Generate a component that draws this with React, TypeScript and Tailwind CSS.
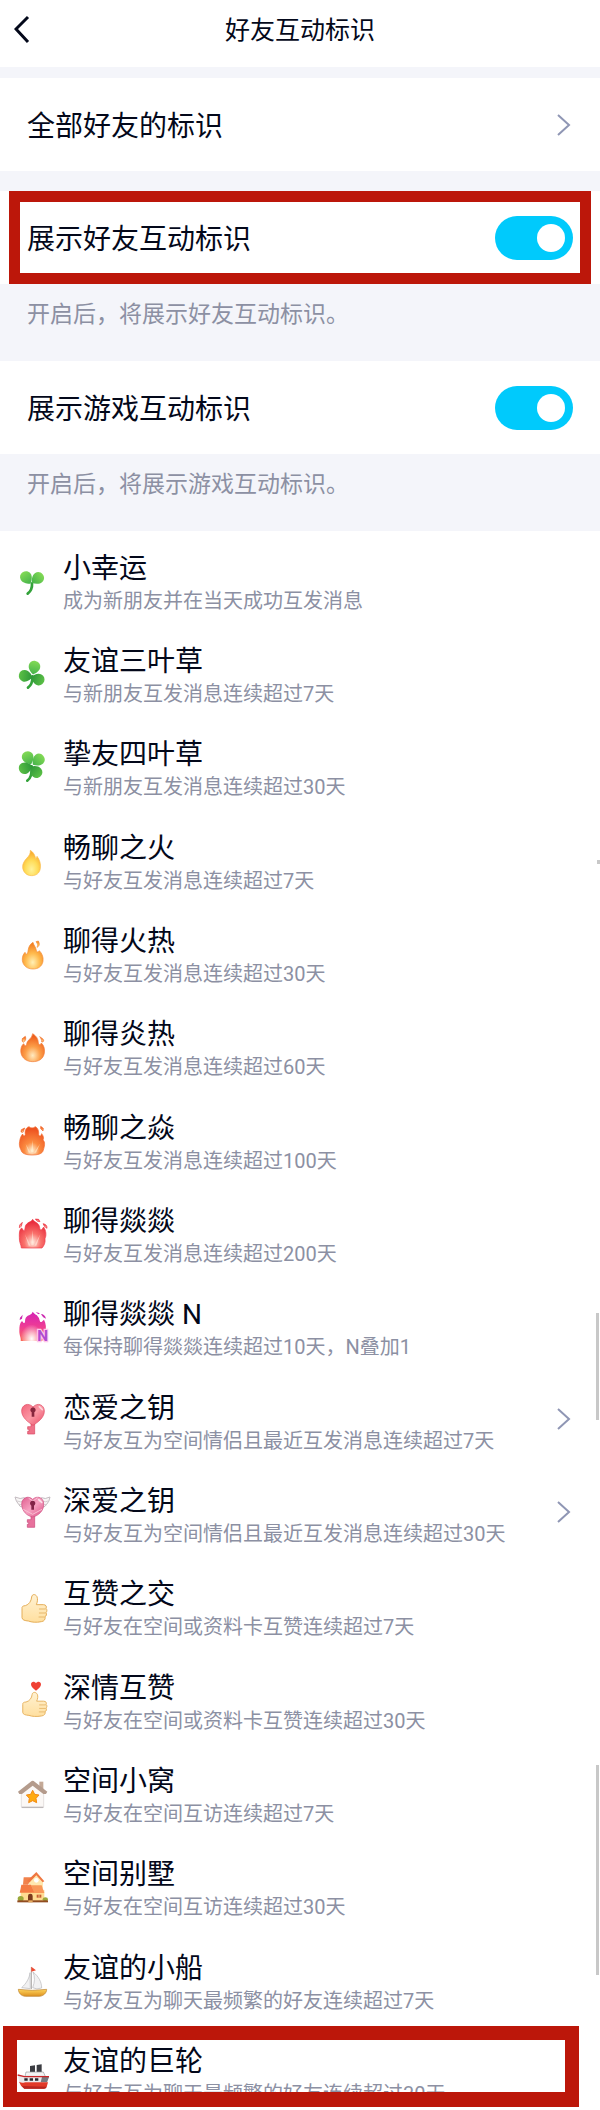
import React, { useState } from 'react';

type BadgeItem = {
	title: string;
	detail: string;
	icon: React.ReactNode;
	link?: boolean;
};

const Clover: React.FC<{ leaves: number[][]; stem: string }> = ({
	leaves,
	stem,
}) => (
	<>
		<path d={stem} fill="none" stroke="#33a23a" strokeWidth="8" strokeLinecap="round" />
		{leaves.map(([x, y, angle, tone]) => (
			<g key={`${x}-${y}`} transform={`translate(${x} ${y}) rotate(${angle}) scale(1.15)`}>
				<path
					d="M0 19C-8 14-16 6-15-4C-14-12-8-17 0-17C8-17 14-12 15-4C16 6 8 14 0 19Z"
					fill={tone ? 'url(#leafDark)' : 'url(#leafLight)'}
				/>
			</g>
		))}
	</>
);

const Thumb: React.FC = () => (
	<>
		<path
			d="M24 62C23 56 27 53 34 53C45 50 52 39 53 27C54 18 64 17 69 26C72 34 70 43 67 50H88C96 50 99 56 96 61C100 65 99 71 96 74C99 79 97 84 93 86C95 93 91 100 82 101C67 104 53 103 43 99C32 98 25 96 24 89Z"
			fill="url(#skin)"
			stroke="#e5ae58"
			strokeWidth="3"
		/>
		<path d="M76 63H94M76 75H94M75 87H91" stroke="#e7b86c" strokeWidth="3" strokeLinecap="round" />
	</>
);

// shared gradients, referenced by every badge icon
const IconDefs: React.FC = () => (
	<svg className="absolute size-0" aria-hidden="true">
		<defs>
			<linearGradient id="leafLight" x1="0" y1="0" x2="0" y2="1">
				<stop offset="0" stopColor="#83da55" />
				<stop offset="1" stopColor="#45b34b" />
			</linearGradient>
			<linearGradient id="leafDark" x1="0" y1="0" x2="0" y2="1">
				<stop offset="0" stopColor="#5cc046" />
				<stop offset="1" stopColor="#2c9638" />
			</linearGradient>
			<radialGradient id="fireYellow" cx=".5" cy=".75" r=".7">
				<stop offset="0" stopColor="#fff29a" />
				<stop offset=".5" stopColor="#ffdc58" />
				<stop offset="1" stopColor="#f9a72c" />
			</radialGradient>
			<radialGradient id="fireAmber" cx=".5" cy=".75" r=".75">
				<stop offset="0" stopColor="#fff0b5" />
				<stop offset=".45" stopColor="#ffbb4e" />
				<stop offset="1" stopColor="#f0751c" />
			</radialGradient>
			<radialGradient id="fireOrange" cx=".5" cy=".78" r=".7">
				<stop offset="0" stopColor="#ffeac0" />
				<stop offset=".45" stopColor="#fc9f49" />
				<stop offset="1" stopColor="#ee5c1b" />
			</radialGradient>
			<radialGradient id="fireDeep" cx=".5" cy=".85" r=".75">
				<stop offset="0" stopColor="#fff0d5" />
				<stop offset=".4" stopColor="#fb8b40" />
				<stop offset="1" stopColor="#ee5421" />
			</radialGradient>
			<radialGradient id="fireRed" cx=".5" cy=".8" r=".7">
				<stop offset="0" stopColor="#ffeade" />
				<stop offset=".45" stopColor="#f9716b" />
				<stop offset="1" stopColor="#e92d3d" />
			</radialGradient>
			<linearGradient id="fireEdge" x1="0" y1="0" x2="0" y2="1">
				<stop offset="0" stopColor="#d421b5" />
				<stop offset=".5" stopColor="#ee3c95" />
				<stop offset="1" stopColor="#fb6a5a" />
			</linearGradient>
			<radialGradient id="fireGlow" cx=".5" cy=".75" r=".5">
				<stop offset="0" stopColor="#ffffff" />
				<stop offset="1" stopColor="#ffffff" stopOpacity="0" />
			</radialGradient>
			<linearGradient id="heartRed" x1="0" y1="0" x2="1" y2="1">
				<stop offset="0" stopColor="#f2637a" />
				<stop offset=".5" stopColor="#fb98a5" />
				<stop offset="1" stopColor="#e84a64" />
			</linearGradient>
			<linearGradient id="heartPink" x1="0" y1="0" x2="1" y2="1">
				<stop offset="0" stopColor="#e05f90" />
				<stop offset=".5" stopColor="#f7a2c2" />
				<stop offset="1" stopColor="#d94c82" />
			</linearGradient>
			<linearGradient id="skin" x1="0" y1="0" x2="0" y2="1">
				<stop offset="0" stopColor="#fff2d3" />
				<stop offset="1" stopColor="#ffdf9f" />
			</linearGradient>
			<linearGradient id="hullYellow" x1="0" y1="0" x2="0" y2="1">
				<stop offset="0" stopColor="#ffd45c" />
				<stop offset="1" stopColor="#dc901f" />
			</linearGradient>
		</defs>
	</svg>
);

const badges: BadgeItem[] = [
	{
		title: '小幸运',
		detail: '成为新朋友并在当天成功互发消息',
		icon: (
			<Clover
				leaves={[[37, 47, -35, 0], [71, 49, 50, 0]]}
				stem="M54 64C55 77 50 88 41 95"
			/>
		),
	},
	{
		title: '友谊三叶草',
		detail: '与新朋友互发消息连续超过7天',
		icon: (
			<Clover
				leaves={[[61, 37, 10, 0], [34, 63, -80, 1], [72, 73, 110, 1]]}
				stem="M55 64C56 80 50 92 42 98"
			/>
		),
	},
	{
		title: '挚友四叶草',
		detail: '与新朋友互发消息连续超过30天',
		icon: (
			<Clover
				leaves={[[42, 29, -25, 0], [73, 36, 48, 0], [34, 60, -110, 1], [66, 71, 135, 1]]}
				stem="M53 55C54 75 51 91 40 98"
			/>
		),
	},
	{
		title: '畅聊之火',
		detail: '与好友互发消息连续超过7天',
		icon: (
			<path
				d="M49 25C59 31 63 40 65 50C67 49 69 46 69 43C77 53 81 66 79 79C77 94 66 101 53 101C38 101 28 91 26 77C25 65 31 57 38 49C45 42 50 35 49 25Z"
				fill="url(#fireYellow)"
				stroke="#fbbd4a"
				strokeWidth="2"
			/>
		),
	},
	{
		title: '聊得火热',
		detail: '与好友互发消息连续超过30天',
		icon: (
			<g fill="url(#fireAmber)" stroke="#f58e35" strokeWidth="2">
				<path d="M57 22C60 33 65 35 67 46C68 52 72 52 76 47C84 55 89 66 87 79C84 95 72 102 57 102C39 102 27 92 25 76C24 65 28 58 33 52C35 56 36 59 39 57C45 52 38 34 57 22Z" />
				<path d="M66 20L73 18C78 27 76 34 69 37C72 31 71 25 66 20Z" />
			</g>
		),
	},
	{
		title: '聊得炎热',
		detail: '与好友互发消息连续超过60天',
		icon: (
			<g fill="url(#fireOrange)" stroke="#f27a35" strokeWidth="2">
				<path d="M56 17C66 23 73 32 73 45C75 52 79 51 82 45C90 52 93 64 91 75C88 94 73 101 56 101C38 101 24 91 21 75C19 64 22 52 29 47C33 55 37 55 38 48C39 35 54 33 56 17Z" />
				<path d="M26 31L34 25C37 32 35 39 28 43C23 41 24 35 26 31Z" />
				<path d="M77 26L86 32C92 38 88 43 83 42C83 36 81 30 77 26Z" />
			</g>
		),
	},
	{
		title: '畅聊之焱',
		detail: '与好友互发消息连续超过100天',
		icon: (
			<>
				<g fill="url(#fireDeep)" stroke="#f2692c" strokeWidth="2">
					<path d="M45 14C51 19 57 19 64 14C72 18 75 27 74 38C77 44 80 43 83 35C89 43 90 49 87 54C95 60 91 75 88 84C86 96 71 99 54 99C37 99 23 95 21 84C16 75 15 66 17 58C18 49 21 42 26 36C29 44 32 43 34 37C32 27 35 17 45 14Z" />
					<path d="M22 23L32 18L27 31L21 30Z" />
					<path d="M80 13L88 19L87 27L80 20Z" />
				</g>
				<path d="M55 54L58 90L52 90ZM35 65L50 92H44ZM78 65L60 92H66Z" fill="#fff0cf" fillOpacity=".6" />
			</>
		),
	},
	{
		title: '聊得燚燚',
		detail: '与好友互发消息连续超过200天',
		icon: (
			<>
				<g fill="url(#fireRed)" stroke="#ee3b48" strokeWidth="2">
					<path d="M56 13C60 21 67 21 72 27C78 33 76 39 79 45C84 45 86 40 89 36C96 47 98 60 93 71C95 83 90 92 84 99H22C22 90 15 82 16 67C16 55 15 45 23 39C28 42 25 47 31 47C35 41 31 34 38 27C44 20 53 21 56 13Z" />
					<path d="M17 30L25 22L22 34L16 38Z" />
					<path d="M64 12L74 13L78 20L70 19Z" />
					<path d="M87 26Q100 28 99 40L92 35Z" />
				</g>
				<path d="M56 45L59 91H52ZM33 58L50 92H44ZM79 58L61 92H67Z" fill="#ffe9dc" fillOpacity=".6" />
			</>
		),
	},
	{
		title: '聊得燚燚 N',
		detail: '每保持聊得燚燚连续超过10天，N叠加1',
		icon: (
			<>
				<path
					d="M56 11C61 19 68 19 72 26C77 31 76 37 79 42C84 43 86 38 90 35C96 47 98 60 93 71C95 83 90 94 84 99H20C22 90 15 82 16 67C16 55 17 45 24 39C28 42 27 47 32 44C35 38 31 33 38 26C44 20 53 21 56 11Z"
					fill="url(#fireEdge)"
				/>
				<path d="M18 29L26 20L24 32L17 36ZM65 12L78 16L73 19ZM81 18Q92 18 96 32Q87 30 81 18Z" fill="#cb2bb0" />
				<ellipse cx="53" cy="71" rx="34" ry="43" fill="url(#fireGlow)" />
				<text x="70" y="99" fill="#b04bd0" stroke="#ffc7ea" strokeWidth="7" paintOrder="stroke" className="font-[Roboto,sans-serif] text-[46px] font-bold">
					N
				</text>
			</>
		),
	},
	{
		title: '恋爱之钥',
		detail: '与好友互为空间情侣且最近互发消息连续超过7天',
		link: true,
		icon: (
			<>
				<path d="M51 60V74H41V82H45V88H41V96H62V60Z" fill="#ef7188" stroke="#d94760" strokeWidth="2" />
				<path d="M57 70C40 59 24 46 23 28C22 8 44 0 57 15C70 0 91 8 91 27C91 47 73 60 57 70Z" fill="url(#heartRed)" stroke="#e04761" strokeWidth="2" />
				<path d="M49 24A8 8 0 1 1 61 31V44H53V31A8 8 0 0 1 49 24Z" fill="#86263d" />
				<path d="M76 14L85 23" stroke="#fff" strokeWidth="5" strokeLinecap="round" opacity=".6" />
			</>
		),
	},
	{
		title: '深爱之钥',
		detail: '与好友互为空间情侣且最近互发消息连续超过30天',
		link: true,
		icon: (
			<>
				<path d="M3 6Q20 14 31 8V38Q14 35 14 28Q6 20 3 6ZM108 6Q93 14 82 8V38Q96 35 98 28Q106 20 108 6Z" fill="#f8f6f6" stroke="#c3bbc0" strokeWidth="3" />
				<path d="M9 18Q21 23 28 18M15 28Q22 30 28 28M102 18Q94 23 85 18M97 28Q91 30 85 28" fill="none" stroke="#c3bbc0" strokeWidth="2" />
				<path d="M51 60V74H40V82H44V88H40V97H62V60Z" fill="#e7719c" stroke="#c94377" strokeWidth="2" />
				<path d="M56 66C39 63 24 49 23 28C23 8 43 0 56 13C70 0 90 8 89 28C89 48 74 62 56 66Z" fill="url(#heartPink)" stroke="#cf4b7e" strokeWidth="2" />
				<path d="M28 43L56 58L84 43M44 10L57 18L71 8" fill="none" stroke="#f9bfd3" strokeWidth="3" />
				<path d="M48 25A8 8 0 1 1 60 32V44H52V32A8 8 0 0 1 48 25Z" fill="#822448" />
				<path d="M74 14L83 22" stroke="#fff" strokeWidth="5" strokeLinecap="round" opacity=".7" />
			</>
		),
	},
	{
		title: '互赞之交',
		detail: '与好友在空间或资料卡互赞连续超过7天',
		icon: <Thumb />,
	},
	{
		title: '深情互赞',
		detail: '与好友在空间或资料卡互赞连续超过30天',
		icon: (
			<>
				<g transform="translate(3 14) scale(.97 .87)">
					<Thumb />
				</g>
				<path d="M66 26C57 20 51 14 51 7C51-2 62-3 66 4C70-3 81-2 81 7C81 14 75 20 66 26Z" fill="#ef4134" />
			</>
		),
	},
	{
		title: '空间小窝',
		detail: '与好友在空间互访连续超过7天',
		icon: (
			<>
				<path d="M76 20H88V42H76Z" fill="#c4a997" />
				<path d="M22 48L55 22L89 48V94Q89 98 85 98H26Q22 98 22 94Z" fill="#fbf8f6" stroke="#d9d3d1" strokeWidth="2" />
				<path d="M23 97H88" stroke="#bdb8b9" strokeWidth="4" />
				<path d="M12 50L53 18Q56 16 59 18L100 50L96 57H88L56 32L24 57H16Z" fill="#b49b8c" />
				<path d="M56 46L62 58L75 60L66 70L68 83L56 77L44 83L46 70L37 60L50 58Z" fill="#ffab12" stroke="#f38b16" strokeWidth="3" strokeLinejoin="round" />
			</>
		),
	},
	{
		title: '空间别墅',
		detail: '与好友在空间互访连续超过30天',
		icon: (
			<>
				<path d="M20 66H91V101H20Z" fill="#ffdc91" />
				<path d="M45 38L68 17L87 40V61H45Z" fill="#ffe7af" />
				<path d="M29 28H55L42 50H27Z" fill="#f1824c" />
				<path d="M67 12L91 40L86 43L67 22L47 43L39 39Z" fill="#ef7741" />
				<circle cx="67" cy="37" r="7" fill="#fff" />
				<path d="M22 50H51L63 74H17Q20 63 22 50Z" fill="#f47b43" />
				<path d="M51 52H83L91 75H61Z" fill="#f99859" />
				<path d="M42 100V84A7 7 0 0 1 56 84V100Z" fill="#7c3b1e" />
				<path d="M68 80H82V89H68Z" fill="#c65d31" />
				<path d="M75 80V89" stroke="#ffe6a8" strokeWidth="2" />
				<ellipse cx="20" cy="92" rx="9" ry="8" fill="#9aa83a" />
				<ellipse cx="94" cy="94" rx="8" ry="6" fill="#9aa83a" />
				<path d="M10 97H102V103H10Z" fill="#914c20" />
				<path d="M43 97H56V103H43Z" fill="#e8ad60" />
			</>
		),
	},
	{
		title: '友谊的小船',
		detail: '与好友互为聊天最频繁的好友连续超过7天',
		icon: (
			<>
				<path d="M52 15V81" stroke="#aaa6a4" strokeWidth="3" />
				<path d="M52 14L66 25L52 29Z" fill="#ef4a31" />
				<path d="M48 32C46 50 36 65 23 77L49 80Z" fill="#f1f1f2" stroke="#b7b7ba" strokeWidth="2" />
				<path d="M57 30C73 42 83 60 83 78Q68 84 56 77Q66 51 57 30Z" fill="#f1f1f2" stroke="#b7b7ba" strokeWidth="2" />
				<path d="M13 82Q55 88 98 82C98 94 87 102 77 103H34C22 102 14 94 13 82Z" fill="url(#hullYellow)" stroke="#b9812e" strokeWidth="2" />
			</>
		),
	},
	{
		title: '友谊的巨轮',
		detail: '与好友互为聊天最频繁的好友连续超过30天',
		icon: (
			<>
				<path d="M48 33L63 31V52H48ZM68 30L83 28V52H68Z" fill="#3b3d42" />
				<path d="M36 51H88L94 64H33Z" fill="#f4f4f4" stroke="#999b9f" strokeWidth="2" />
				<path d="M11 62L31 66H105L99 82H17Z" fill="#e9e9eb" />
				<path d="M84 66H105L99 82H80Z" fill="#77797f" />
				<path d="M11 60L31 65H105" fill="none" stroke="#c9282b" strokeWidth="4" />
				<path d="M31 70H41V77H31ZM47 70H57V77H47ZM63 70H73V77H63Z" fill="#26282d" />
				<path d="M15 80Q25 85 34 82H102L98 96Q96 101 90 101H31Q19 93 15 80Z" fill="#e23a28" />
				<path d="M24 93Q27 98 31 101H90Q96 101 98 95Z" fill="#b7261f" />
			</>
		),
	},
];

const Chevron: React.FC = () => (
	<svg viewBox="0 0 14 22" className="h-[22px] w-[14px] shrink-0" fill="none" stroke="#8f96b4" strokeWidth="2" aria-hidden="true">
		<path d="M1 1L12 11L1 21" />
	</svg>
);

const SwitchRow: React.FC<{ label: string; hint: string; marked?: boolean }> = ({
	label,
	hint,
	marked,
}) => {
	const [on, setOn] = useState(true);

	return (
		<section>
			<label className="relative flex h-[93px] cursor-pointer items-center justify-between bg-white px-[27px]">
				<span className="pt-1 text-[28px] leading-10">{label}</span>
				<input
					type="checkbox"
					role="switch"
					checked={on}
					onChange={() => setOn(!on)}
					className="flex h-11 w-[78px] appearance-none items-center rounded-full bg-[#c9cdd8] px-2 before:size-7 before:rounded-full before:bg-white before:content-[''] checked:justify-end checked:bg-[#00cafc]"
				/>
				{marked && (
					<span className="pointer-events-none absolute inset-x-[9px] inset-y-0 border-[11px] border-[#bc170a]" />
				)}
			</label>
			<p className="h-[77px] px-[27px] pt-[14px] text-[23px] leading-[34px] text-[#8c90a3]">
				{hint}
			</p>
		</section>
	);
};

const BadgeRow: React.FC<{ badge: BadgeItem }> = ({ badge }) => {
	const content = (
		<>
			<svg viewBox="0 0 108 120" className="mt-[30px] h-10 w-9 shrink-0 overflow-visible" aria-hidden="true">
				{badge.icon}
			</svg>
			<div className="min-w-0 flex-1 pt-[17px]">
				<h2 className="text-[28px] leading-10">{badge.title}</h2>
				<p className="text-xl leading-6 whitespace-nowrap text-[#8c90a3]">
					{badge.detail}
				</p>
			</div>
			{badge.link && (
				<div className="pt-9">
					<Chevron />
				</div>
			)}
		</>
	);

	return (
		<li className="h-[93px] nth-[3n]:h-[94px]">
			{badge.link ? (
				<a href="#detail" className="flex gap-[13px] pr-[29px] pl-[14px]">
					{content}
				</a>
			) : (
				<div className="flex gap-[13px] pr-[29px] pl-[14px]">{content}</div>
			)}
		</li>
	);
};

const App: React.FC = () => {
	const regular = badges.slice(0, -1);
	const last = badges[badges.length - 1];

	return (
		<div className="relative bg-[#f4f5fa] font-[Roboto,'Noto_Sans_CJK_SC',sans-serif] text-[#03081a]">
			<IconDefs />

			<header className="relative flex h-[67px] items-center justify-center bg-white pb-[6px]">
				<button type="button" aria-label="返回" className="absolute top-[13px] left-[14px]">
					<svg viewBox="0 0 16 32" className="h-8 w-4" fill="none" stroke="#03081a" strokeWidth="3" aria-hidden="true">
						<path d="M14 4L2 16L14 29" />
					</svg>
				</button>
				<h1 className="text-[25px] leading-9">好友互动标识</h1>
			</header>

			<a href="#all" className="mt-[11px] mb-5 flex h-[93px] items-center justify-between bg-white pr-[29px] pl-[27px]">
				<span className="pt-1 text-[28px] leading-10">全部好友的标识</span>
				<Chevron />
			</a>

			<SwitchRow label="展示好友互动标识" hint="开启后，将展示好友互动标识。" marked />
			<SwitchRow label="展示游戏互动标识" hint="开启后，将展示游戏互动标识。" />

			<main className="bg-white pt-px pb-[3px]">
				<ul>
					{regular.map((badge) => (
						<BadgeRow key={badge.title} badge={badge} />
					))}
				</ul>
				{/* the last row is cut off by the frame around it */}
				<div className="relative h-[82px] overflow-hidden">
					<ul>
						<BadgeRow badge={last} />
					</ul>
					<span className="pointer-events-none absolute top-px right-[21px] bottom-0 left-[3px] border-[14px] border-b-[15px] border-[#bc170a]" />
				</div>
			</main>

			{/* scroll indicators */}
			<span className="absolute top-[860px] right-0 h-1 w-[3px] bg-[#c8c8c8]" />
			<span className="absolute top-[1313px] right-[1px] h-[107px] w-[3px] bg-[#c8c8c8]" />
			<span className="absolute top-[1765px] right-[1px] h-[210px] w-[3px] bg-[#c8c8c8]" />
		</div>
	);
};

export default App;
